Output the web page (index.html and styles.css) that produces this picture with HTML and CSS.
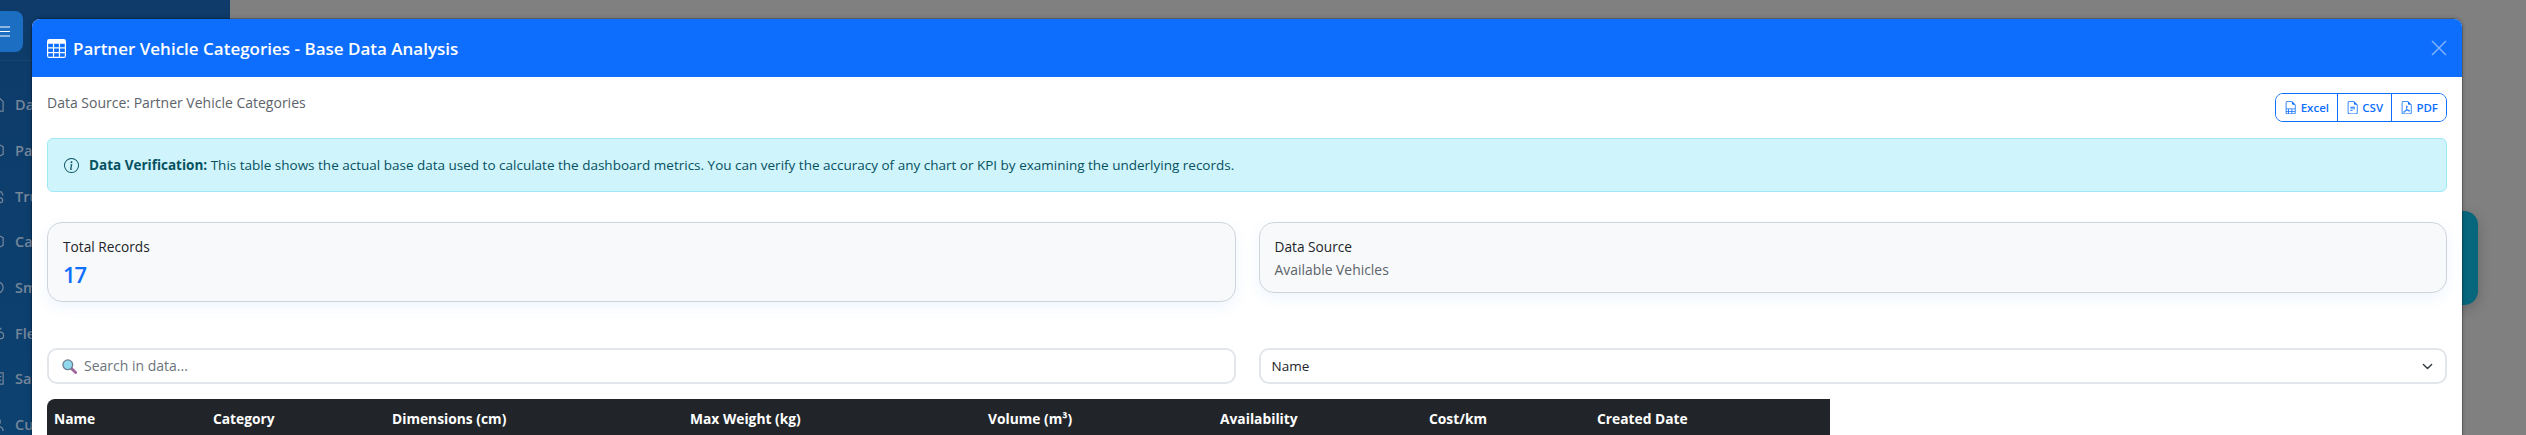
FILE: index.html
```html
<!DOCTYPE html>
<html lang="en">

<head>
    <meta charset="UTF-8">
    <meta name="viewport" content="width=device-width, initial-scale=1.0">
    <title>Partner Vehicle Categories</title>
    <link rel="stylesheet" href="styles.css">
</head>

<body>

    <div class="page">
        <div class="sidebar">
            <div class="sidebarTop">
                <button class="menuBtn">
                    <svg width="14" height="11" viewBox="0 0 14 11"><path d="M0 1h14M0 5.5h14M0 10h14" stroke="#fff" stroke-width="1.2"/></svg>
                </button>
                <span class="brand">Fuel Optim</span>
            </div>
            <div class="sideItem"><svg class="sideIcon" viewBox="0 0 16 16"><path d="M2 1h8l4 4v10H2z"/></svg>Da</div>
            <div class="sideItem"><svg class="sideIcon" viewBox="0 0 16 16"><path d="M8 1l6 3v8l-6 3-6-3V4z"/></svg>Pac</div>
            <div class="sideItem"><svg class="sideIcon" viewBox="0 0 16 16"><circle cx="11" cy="12" r="2.5"/><path d="M9 9V3h3l2 4"/></svg>Tru</div>
            <div class="sideItem"><svg class="sideIcon" viewBox="0 0 16 16"><path d="M8 1l6 3v8l-6 3-6-3V4z"/></svg>Car</div>
            <div class="sideItem"><svg class="sideIcon" viewBox="0 0 16 16"><circle cx="8" cy="8" r="6"/></svg>Sm</div>
            <div class="sideItem"><svg class="sideIcon" viewBox="0 0 16 16"><circle cx="11" cy="10" r="3.5"/><path d="M9 6l3-4"/></svg>Fle</div>
            <div class="sideItem"><svg class="sideIcon" viewBox="0 0 16 16"><path d="M2 2h12v12H2zM6 6h6M6 10h6"/></svg>Sal</div>
            <div class="sideItem"><svg class="sideIcon" viewBox="0 0 16 16"><circle cx="8" cy="5" r="3"/><path d="M2 15c0-4 3-5 6-5s6 1 6 5"/></svg>Cus</div>
        </div>
        <div class="mainArea">
            <div class="tealCard"></div>
        </div>
    </div>

    <div class="modal">
        <div class="modalHeader">
            <h5 class="modalTitle">
                <svg class="titleIcon" viewBox="0 0 16 16" fill="currentColor"><path d="M0 2a2 2 0 0 1 2-2h12a2 2 0 0 1 2 2v12a2 2 0 0 1-2 2H2a2 2 0 0 1-2-2zm15 2h-4v3h4zm0 4h-4v3h4zm0 4h-4v3h3a1 1 0 0 0 1-1zm-5 3v-3H6v3zm-5 0v-3H1v2a1 1 0 0 0 1 1zm-4-4h4V8H1zm0-4h4V4H1zm5-3v3h4V4zm4 4H6v3h4z"/></svg>
                Partner Vehicle Categories - Base Data Analysis
            </h5>
            <svg class="closeBtn" viewBox="0 0 16 16"><path d="M1 1l14 14M15 1L1 15" stroke="#fff" stroke-width="1.4"/></svg>
        </div>

        <div class="modalBody">
            <div class="sourceRow">
                <span class="sourceText">Data Source: Partner Vehicle Categories</span>
                <div class="btnGroup">
                    <button class="exportBtn">
                        <svg class="fileIcon" viewBox="0 0 16 16" fill="currentColor"><path d="M14 14V4.5L9.5 0H4a2 2 0 0 0-2 2v12a2 2 0 0 0 2 2h8a2 2 0 0 0 2-2M9.5 3A1.5 1.5 0 0 0 11 4.5h2V9H3V2a1 1 0 0 1 1-1h5.5zM3 12v-2h2v2zm0 1h2v2H4a1 1 0 0 1-1-1zm3 2v-2h3v2zm4 0v-2h3v1a1 1 0 0 1-1 1zm3-3h-3v-2h3zm-7 0v-2h3v2z"/></svg>
                        Excel
                    </button>
                    <button class="exportBtn">
                        <svg class="fileIcon" viewBox="0 0 16 16" fill="currentColor"><path d="M5.5 7a.5.5 0 0 0 0 1h5a.5.5 0 0 0 0-1zM5 9.5a.5.5 0 0 1 .5-.5h5a.5.5 0 0 1 0 1h-5a.5.5 0 0 1-.5-.5m0 2a.5.5 0 0 1 .5-.5h2a.5.5 0 0 1 0 1h-2a.5.5 0 0 1-.5-.5"/><path d="M14 4.5V14a2 2 0 0 1-2 2H4a2 2 0 0 1-2-2V2a2 2 0 0 1 2-2h5.5zm-3 0A1.5 1.5 0 0 1 9.5 3V1H4a1 1 0 0 0-1 1v12a1 1 0 0 0 1 1h8a1 1 0 0 0 1-1V4.5z"/></svg>
                        CSV
                    </button>
                    <button class="exportBtn">
                        <svg class="fileIcon" viewBox="0 0 16 16" fill="currentColor"><path d="M14 14V4.5L9.5 0H4a2 2 0 0 0-2 2v12a2 2 0 0 0 2 2h8a2 2 0 0 0 2-2M9.5 3A1.5 1.5 0 0 0 11 4.5h2V14a1 1 0 0 1-1 1H4a1 1 0 0 1-1-1V2a1 1 0 0 1 1-1h5.5z"/><path d="M4.603 14.087a.8.8 0 0 1-.438-.42c-.195-.388-.13-.776.08-1.102.198-.307.526-.568.897-.787a7.7 7.7 0 0 1 1.482-.645 20 20 0 0 0 1.062-2.227 7.3 7.3 0 0 1-.43-1.295c-.086-.4-.119-.796-.046-1.136.075-.354.274-.672.65-.823.192-.077.4-.12.602-.077a.7.7 0 0 1 .477.365c.088.164.12.356.127.538.007.188-.012.396-.047.614-.084.51-.27 1.134-.52 1.794a11 11 0 0 0 .98 1.686 5.8 5.8 0 0 1 1.334.05c.364.066.734.195.96.465.12.144.193.32.2.518.007.192-.047.382-.138.563a1.04 1.04 0 0 1-.354.416.86.86 0 0 1-.51.138c-.331-.014-.654-.196-.933-.417a5.7 5.7 0 0 1-.911-.95 11.7 11.7 0 0 0-1.997.406 11.3 11.3 0 0 1-1.02 1.51c-.292.35-.609.656-.927.787a.8.8 0 0 1-.58.029m1.379-1.901q-.25.115-.459.238c-.328.194-.541.383-.647.547-.094.145-.096.25-.04.361q.016.032.026.044l.035-.012c.137-.056.355-.235.635-.572a8 8 0 0 0 .45-.606m1.64-1.33a13 13 0 0 1 1.01-.193 12 12 0 0 1-.51-.858 21 21 0 0 1-.5 1.05zm2.446.45q.226.245.435.41c.24.19.407.253.498.256a.1.1 0 0 0 .07-.015.3.3 0 0 0 .094-.125.44.44 0 0 0 .059-.2.1.1 0 0 0-.026-.063c-.052-.062-.2-.152-.518-.209a4 4 0 0 0-.612-.053zM8.078 7.8a7 7 0 0 0 .2-.828q.046-.282.038-.465a.6.6 0 0 0-.032-.198.5.5 0 0 0-.145.04c-.087.035-.158.106-.196.283-.04.192-.03.469.046.822q.036.167.09.346z"/></svg>
                        PDF
                    </button>
                </div>
            </div>

            <div class="alertBox">
                <svg class="infoIcon" viewBox="0 0 16 16" fill="currentColor"><path d="M8 15A7 7 0 1 1 8 1a7 7 0 0 1 0 14m0 1A8 8 0 1 0 8 0a8 8 0 0 0 0 16"/><path d="m8.93 6.588-2.29.287-.082.38.45.083c.294.07.352.176.288.469l-.738 3.468c-.194.897.105 1.319.808 1.319.545 0 1.178-.252 1.465-.598l.088-.416c-.2.176-.492.246-.686.246-.275 0-.375-.193-.304-.533zM9 4.5a1 1 0 1 1-2 0 1 1 0 0 1 2 0"/></svg>
                <span><strong>Data Verification:</strong> This table shows the actual base data used to calculate the dashboard metrics. You can verify the accuracy of any chart or KPI by examining the underlying records.</span>
            </div>

            <div class="twoCols statsRow">
                <div class="statCard">
                    <div class="statLabel">Total Records</div>
                    <div class="statNumber">17</div>
                </div>
                <div class="statCard">
                    <div class="statLabel">Data Source</div>
                    <div class="statSub">Available Vehicles</div>
                </div>
            </div>

            <div class="twoCols filterRow">
                <div class="fieldBox">
                    <svg class="searchIcon" width="15" height="15" viewBox="0 0 16 16"><path d="M9.5 9.5l5 5" stroke="#a0649c" stroke-width="3" stroke-linecap="round"/><circle cx="6.2" cy="6.2" r="5.2" fill="#8fd9ee" stroke="#6f7f92" stroke-width="1.4"/></svg>
                    <input class="searchInput" type="text" placeholder="Search in data...">
                </div>
                <div class="fieldBox selectBox">
                    <select class="fieldSelect">
                        <option>Name</option>
                    </select>
                    <svg class="chevron" viewBox="0 0 16 16"><path d="M2 5l6 6 6-6" fill="none" stroke="#343a40" stroke-width="2" stroke-linecap="round" stroke-linejoin="round"/></svg>
                </div>
            </div>

            <table class="dataTable">
                <thead>
                    <tr>
                        <th class="colName">Name</th>
                        <th class="colCategory">Category</th>
                        <th class="colWide">Dimensions (cm)</th>
                        <th class="colWide">Max Weight (kg)</th>
                        <th class="colVolume">Volume (m³)</th>
                        <th class="colAvail">Availability</th>
                        <th class="colCost">Cost/km</th>
                        <th class="colDate">Created Date</th>
                    </tr>
                </thead>
            </table>
        </div>
    </div>

</body>

</html>
```

FILE: styles.css
```css
* {
    box-sizing: border-box;
}

html, body {
    height: 100%;
}

body {
    font-family: "Open Sans", "Noto Sans", sans-serif;
    margin: 0;
    padding: 0;
    background-color: #808080;
    overflow: hidden;
}

.page {
    display: flex;
    height: 435px;
}

.sidebar {
    width: 230px;
    background: linear-gradient(180deg, #0e3b69 0%, #0c4170 100%);
    color: #75869a;
    overflow: hidden;
    flex-shrink: 0;
}

.sidebarTop {
    display: flex;
    align-items: flex-start;
    gap: 19px;
    height: 61px;
    padding-top: 11px;
    margin-left: -18px;
    border-bottom: 1px solid #15436f;
    margin-bottom: 21px;
}

.menuBtn {
    width: 41px;
    height: 41px;
    background-color: #1b6ec2;
    border: none;
    border-radius: 8px;
    padding: 0 0 0 14px;
    display: flex;
    align-items: center;
}

.brand {
    margin-top: 3px;
    font-size: 24px;
    line-height: 27px;
    font-weight: 700;
    white-space: nowrap;
    color: #75767a;
}

.sideItem {
    display: flex;
    align-items: center;
    gap: 10px;
    height: 45.7px;
    margin-left: -10px;
    font-size: 14.5px;
    font-weight: 600;
}

.sideIcon {
    width: 15px;
    height: 17px;
    flex-shrink: 0;
    fill: none;
    stroke: #75869a;
    stroke-width: 1.3;
}

.mainArea {
    flex: 1;
    display: flex;
    justify-content: flex-end;
    align-items: flex-start;
    padding: 211px 48px 0 0;
}

.tealCard {
    width: 200px;
    height: 94px;
    background-color: #05667c;
    border-radius: 14px;
    box-shadow: 0 4px 14px rgba(0, 0, 0, 0.2);
}

.modal {
    position: absolute;
    top: 19px;
    left: 32px;
    width: 2430px;
    height: 600px;
    background-color: #fff;
    border-radius: 8px;
    box-shadow: 0 0 0 1px rgba(0, 0, 0, 0.2), 0 0 5px rgba(0, 0, 0, 0.25);
    overflow: hidden;
}

.modalHeader {
    display: flex;
    align-items: center;
    justify-content: space-between;
    height: 58px;
    padding: 0 15px;
    background-color: #0d6efd;
    color: #fff;
}

.modalTitle {
    display: flex;
    align-items: center;
    gap: 7px;
    margin: 0;
    font-size: 17px;
    font-weight: 600;
}

.titleIcon {
    width: 19px;
    height: 19px;
}

.closeBtn {
    width: 16px;
    height: 16px;
    opacity: 0.5;
}

.modalBody {
    padding: 16px 15px;
}

.sourceRow {
    display: flex;
    justify-content: space-between;
    align-items: flex-start;
    height: 45px;
}

.sourceText {
    font-size: 14px;
    line-height: 20px;
    color: #5c636a;
}

.btnGroup {
    display: flex;
    height: 29px;
    border: 1px solid #0d6efd;
    border-radius: 8px;
    overflow: hidden;
}

.exportBtn {
    display: flex;
    align-items: center;
    gap: 3px;
    height: 100%;
    padding: 0 8px;
    background: #fff;
    border: none;
    border-left: 1px solid #0d6efd;
    color: #0d6efd;
    font-family: inherit;
    font-size: 11.5px;
    font-weight: 600;
}

.exportBtn:first-child {
    border-left: none;
}

.fileIcon {
    width: 13.3px;
    height: 13.3px;
}

.alertBox {
    display: flex;
    align-items: center;
    gap: 10px;
    height: 54px;
    padding: 0 16px;
    background-color: #cff4fc;
    border: 1px solid #9eeaf9;
    border-radius: 6px;
    color: #055160;
    font-size: 13.5px;
}

.infoIcon {
    width: 15px;
    height: 15px;
    flex-shrink: 0;
}

.twoCols {
    display: grid;
    grid-template-columns: 1fr 1fr;
    gap: 23px;
}

.statsRow {
    align-items: start;
    margin-top: 30px;
}

.statCard {
    padding: 14px 15px 10px;
    background-color: #f8f9fa;
    border: 1px solid #ced4da;
    border-radius: 15px;
    box-shadow: 0 5px 15px rgba(13, 110, 253, 0.07);
}

.statLabel {
    font-size: 13.7px;
    line-height: 20px;
    color: #212529;
}

.statNumber {
    font-size: 22px;
    font-weight: 600;
    color: #0d6efd;
    line-height: 34px;
    letter-spacing: -1px;
}

.statSub {
    font-size: 13.9px;
    color: #5c636a;
    line-height: 25px;
}

.filterRow {
    margin-top: 46px;
}

.fieldBox {
    display: flex;
    align-items: center;
    gap: 7px;
    height: 36px;
    padding: 0 13px;
    background-color: #fff;
    border: 2px solid #e2e6ea;
    border-radius: 10px;
}

.selectBox {
    padding: 0 12px 0 11px;
}

.searchInput {
    flex: 1;
    border: none;
    outline: none;
    font-family: inherit;
    font-size: 14px;
    color: #212529;
    padding: 0;
    margin-bottom: 2px;
}

.searchInput::placeholder {
    color: #6c757d;
}

.fieldSelect {
    flex: 1;
    border: none;
    outline: none;
    appearance: none;
    background: none;
    font-family: inherit;
    font-size: 13.5px;
    color: #212529;
    padding: 0;
}

.chevron {
    width: 11px;
    height: 11px;
}

.dataTable {
    width: 1783px;
    margin-top: 15px;
    border-collapse: separate;
    border-spacing: 0;
    table-layout: fixed;
    color: #fff;
}

.dataTable th {
    text-align: left;
    height: 38px;
    padding: 0 7px;
    background-color: #212529;
    font-size: 13.8px;
    font-weight: 700;
}

.dataTable th:first-child {
    border-top-left-radius: 8px;
}

.colName { width: 159px; }
.colCategory { width: 179px; }
.colWide { width: 298px; }
.colVolume { width: 232px; }
.colAvail { width: 209px; }
.colCost { width: 168px; }
.colDate { width: 240px; }
```
